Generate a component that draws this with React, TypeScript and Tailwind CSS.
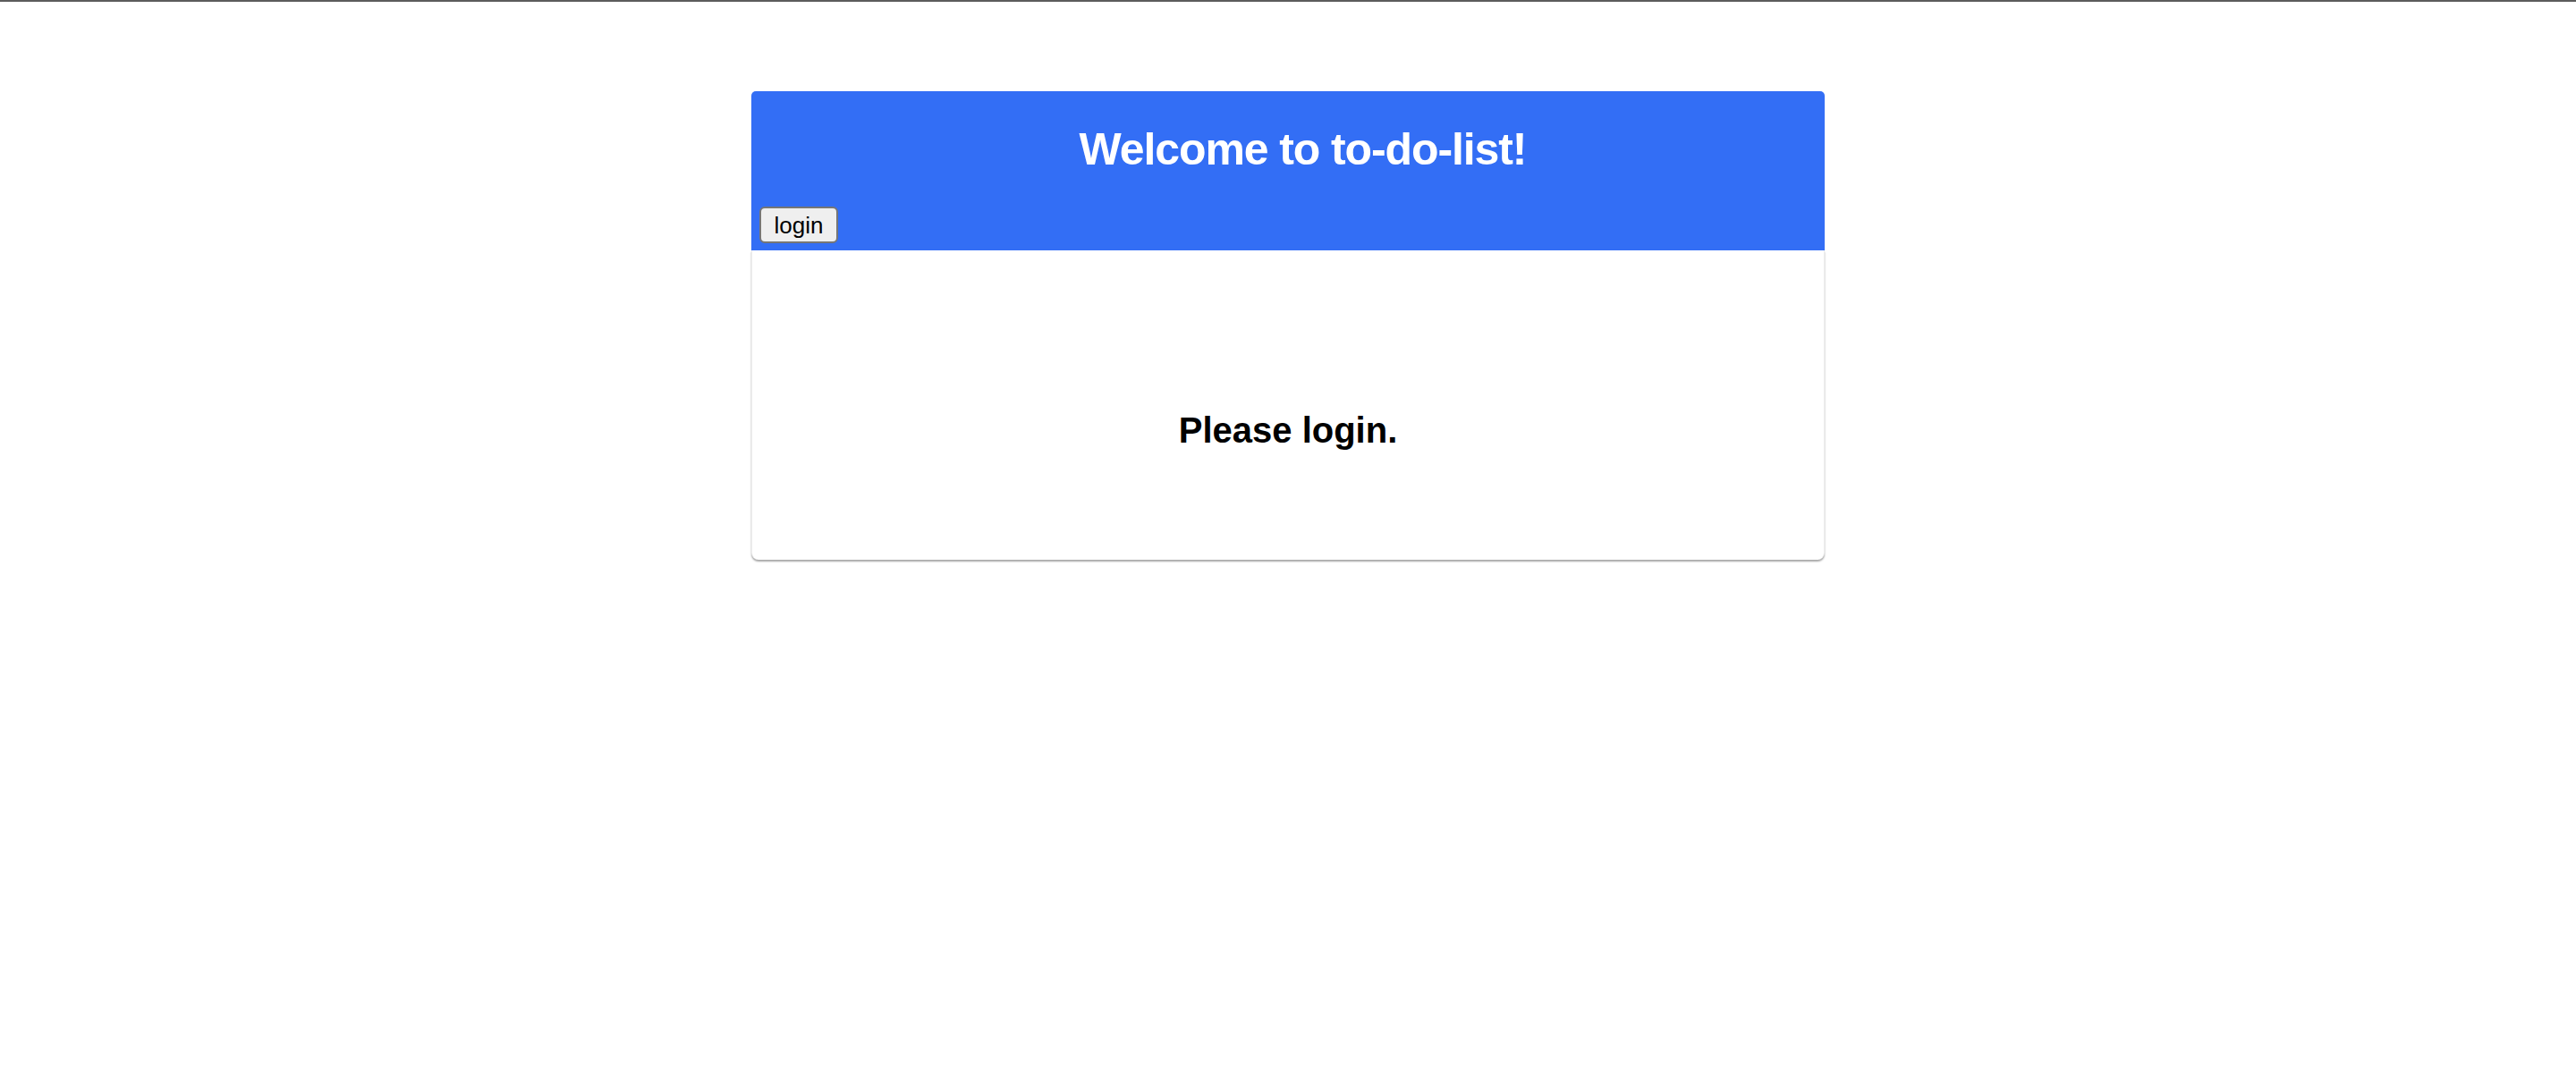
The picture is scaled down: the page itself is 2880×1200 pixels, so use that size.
export default function App() {
  return (
    <div
      className="min-h-[1200px] w-full border-t-2 border-[#5c5c5c] bg-white"
      style={{ fontFamily: '"Liberation Sans", Arial, sans-serif' }}
    >
      <div className="mx-auto mt-[100px] w-[1200px]">
        <header className="flex h-[178px] flex-col rounded-t-[5px] bg-[#336ef5] px-[9px] pt-[37px] pb-[8px]">
          <h1 className="ml-[33px] text-center text-[50px] leading-[1.15] font-bold tracking-[-1.1px] text-white">
            Welcome to to-do-list!
          </h1>
          <div className="mt-auto">
            <button
              type="button"
              className="h-[41px] w-[88px] rounded-[6px] border-2 border-[#767676] bg-[#efefef] text-[26px] leading-none text-black"
            >
              login
            </button>
          </div>
        </header>
        <main className="h-[346px] rounded-b-[8px] border-x border-[#ececec] bg-white pt-[178px] text-center shadow-[0_2px_2px_rgba(0,0,0,0.35)]">
          <h2 className="text-[40px] leading-[1.15] font-bold text-black">Please login.</h2>
        </main>
      </div>
    </div>
  );
}
